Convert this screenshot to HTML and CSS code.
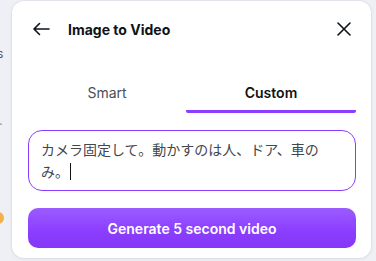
FILE: index.html
```html
<!DOCTYPE html>
<html lang="ja">
<head>
<meta charset="utf-8">
<link rel="stylesheet" href="styles.css">
</head>
<body>
<div class="page">
  <aside class="side">
    <span class="side-text">s</span>
    <span class="side-dot">.</span>
    <span class="side-badge"></span>
  </aside>
  <section class="card">
    <header class="head">
      <button class="icon-btn back" aria-label="Back">
        <svg width="18" height="14" viewBox="0 0 18 14"><path d="M17 7H2M7.5 1.5L2 7l5.5 5.5" fill="none" stroke="#0e1318" stroke-width="1.6" stroke-linecap="round" stroke-linejoin="round"/></svg>
      </button>
      <h1 class="title">Image to Video</h1>
      <button class="icon-btn close" aria-label="Close">
        <svg width="14" height="14" viewBox="0 0 14 14"><path d="M1 1l12 12M13 1L1 13" fill="none" stroke="#0e1318" stroke-width="1.6" stroke-linecap="round"/></svg>
      </button>
    </header>
    <nav class="tabs">
      <div class="tab smart">Smart</div>
      <div class="tab active">Custom</div>
    </nav>
    <div class="prompt">カメラ固定して。動かすのは人、ドア、車の<br>み。<span class="caret"></span></div>
    <button class="generate">Generate 5 second video</button>
  </section>
</div>
</body>
</html>
```
FILE: styles.css
```css
* { box-sizing: border-box; }
html, body { margin: 0; padding: 0; }
body {
  background: #eef0f5;
  font-family: Inter, "Noto Sans", "Noto Sans CJK JP", sans-serif;
  width: 376px;
  height: 261px;
  overflow: hidden;
}
.page {
  display: flex;
  height: 261px;
}
.side {
  width: 12px;
  flex: none;
  position: relative;
  overflow: hidden;
}
.side-text {
  position: absolute;
  left: -3px;
  top: 46px;
  font-size: 12px;
  color: #555;
}
.side-dot {
  position: absolute;
  left: -1px;
  top: 112px;
  font-size: 13px;
  color: #999;
}
.side-badge {
  position: absolute;
  left: -8px;
  top: 212px;
  width: 12px;
  height: 12px;
  border-radius: 50%;
  background: #f4b04a;
}
.card {
  width: 359px;
  margin-top: 1px;
  height: 257px;
  background: #fff;
  border-radius: 12px;
  box-shadow: 0 0 0 1px rgba(20, 30, 60, 0.04), 0 1px 4px rgba(20, 30, 60, 0.06);
  padding: 0 15px 0 16px;
  display: flex;
  flex-direction: column;
}
.head {
  display: flex;
  align-items: center;
  height: 56px;
}
.icon-btn {
  border: 0;
  background: none;
  padding: 0;
  display: flex;
  align-items: center;
  justify-content: center;
  width: 20px;
  height: 20px;
}
.back { margin-left: 3px; }
.title {
  margin: 0 0 0 17px;
  font-size: 14px;
  font-weight: 700;
  color: #0e1318;
  flex: 1;
}
.close { margin-right: 2px; }
.tabs {
  display: flex;
  margin-top: 18px;
}
.tab {
  flex: 0 0 170px;
  text-align: center;
  font-size: 14px;
  color: #4a4f55;
  height: 38px;
  padding-top: 9px;
  border-bottom: 3px solid transparent;
}
.tab.smart { flex-basis: 158px; }
.tab.active {
  color: #0e1318;
  font-weight: 600;
  border-bottom-color: #8b3dff;
  border-radius: 0 0 2px 2px;
}
.prompt {
  margin-top: 17px;
  border: 1px solid #8b3dff;
  border-radius: 14px;
  padding: 7px 12px 9px 12px;
  height: 61px;
  font-family: "Noto Sans CJK JP", sans-serif;
  font-size: 14px;
  line-height: 22px;
  color: #43474d;
  white-space: nowrap;
}
.caret {
  display: inline-block;
  width: 1px;
  height: 17px;
  background: #0e1318;
  margin-left: 1px;
  vertical-align: -3px;
}
.generate {
  margin-top: 17px;
  height: 40px;
  border: 0;
  border-radius: 10px;
  background: linear-gradient(180deg, #9b5cff 0%, #8b3dff 60%, #8536f7 100%);
  color: #fff;
  font-family: Inter, "Noto Sans", sans-serif;
  font-size: 14px;
  font-weight: 600;
}
```
